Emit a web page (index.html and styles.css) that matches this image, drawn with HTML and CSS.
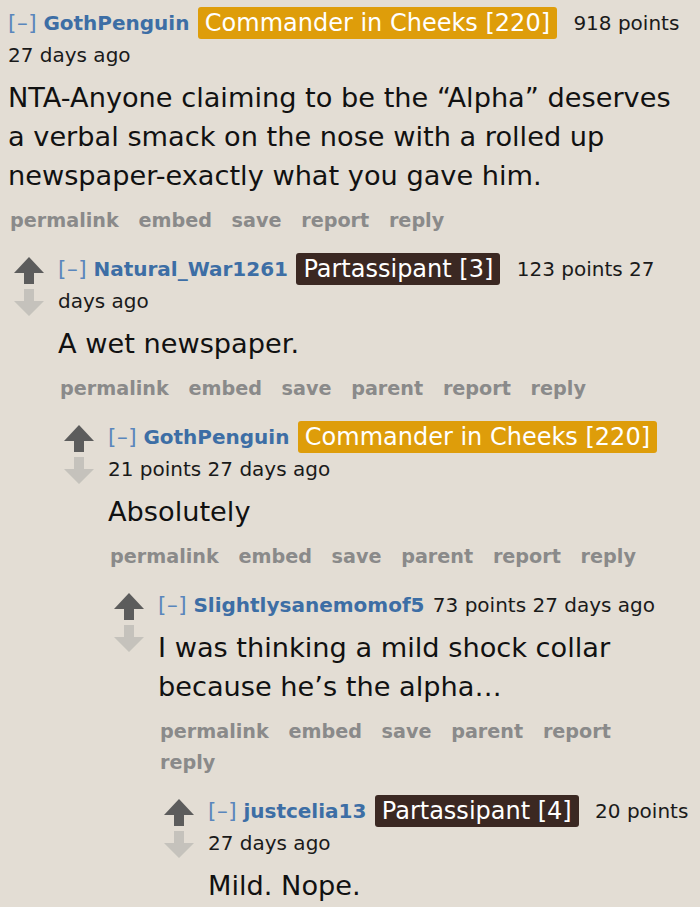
FILE: index.html
```html
<!DOCTYPE html>
<html>
<head>
<meta charset="utf-8">
<link rel="stylesheet" href="styles.css">
</head>
<body>
<div class="thread">
  <div class="entry">
    <p class="tagline"><a class="expand">[–]</a> <a class="author">GothPenguin</a> <span class="flair flair-orange">Commander in Cheeks [220]</span> <span class="score">918 points</span> <time>27 days ago</time></p>
    <div class="md">NTA-Anyone claiming to be the “Alpha” deserves a verbal smack on the nose with a rolled up newspaper-exactly what you gave him.</div>
    <ul class="buttons"><li>permalink</li> <li>embed</li> <li>save</li> <li>report</li> <li>reply</li></ul>

    <div class="comment">
      <div class="midcol">
        <svg class="arrow up" viewBox="0 0 30 27"><polygon points="15,0 30,16 20,16 20,27 10,27 10,16 0,16"/></svg>
        <svg class="arrow down" viewBox="0 0 30 27"><polygon points="10,0 20,0 20,12 30,12 15,27 0,12 10,12"/></svg>
      </div>
      <div class="entry">
        <p class="tagline"><a class="expand">[–]</a> <a class="author">Natural_War1261</a> <span class="flair flair-dark">Partassipant [3]</span> <span class="score">123 points</span> <time>27 days ago</time></p>
        <div class="md">A wet newspaper.</div>
        <ul class="buttons"><li>permalink</li> <li>embed</li> <li>save</li> <li>parent</li> <li>report</li> <li>reply</li></ul>

        <div class="comment">
          <div class="midcol">
            <svg class="arrow up" viewBox="0 0 30 27"><polygon points="15,0 30,16 20,16 20,27 10,27 10,16 0,16"/></svg>
            <svg class="arrow down" viewBox="0 0 30 27"><polygon points="10,0 20,0 20,12 30,12 15,27 0,12 10,12"/></svg>
          </div>
          <div class="entry">
            <p class="tagline"><a class="expand">[–]</a> <a class="author">GothPenguin</a> <span class="flair flair-orange">Commander in Cheeks [220]</span> <span class="score">21 points</span> <time>27 days ago</time></p>
            <div class="md">Absolutely</div>
            <ul class="buttons"><li>permalink</li> <li>embed</li> <li>save</li> <li>parent</li> <li>report</li> <li>reply</li></ul>

            <div class="comment">
              <div class="midcol">
                <svg class="arrow up" viewBox="0 0 30 27"><polygon points="15,0 30,16 20,16 20,27 10,27 10,16 0,16"/></svg>
                <svg class="arrow down" viewBox="0 0 30 27"><polygon points="10,0 20,0 20,12 30,12 15,27 0,12 10,12"/></svg>
              </div>
              <div class="entry">
                <p class="tagline"><a class="expand">[–]</a> <a class="author">Slightlysanemomof5</a> <span class="score">73 points</span> <time>27 days ago</time></p>
                <div class="md">I was thinking a mild shock collar because he’s the alpha…</div>
                <ul class="buttons"><li>permalink</li> <li>embed</li> <li>save</li> <li>parent</li> <li>report</li> <li>reply</li></ul>

                <div class="comment">
                  <div class="midcol">
                    <svg class="arrow up" viewBox="0 0 30 27"><polygon points="15,0 30,16 20,16 20,27 10,27 10,16 0,16"/></svg>
                    <svg class="arrow down" viewBox="0 0 30 27"><polygon points="10,0 20,0 20,12 30,12 15,27 0,12 10,12"/></svg>
                  </div>
                  <div class="entry">
                    <p class="tagline"><a class="expand">[–]</a> <a class="author">justcelia13</a> <span class="flair flair-dark">Partassipant [4]</span> <span class="score">20 points</span> <time>27 days ago</time></p>
                    <div class="md">Mild. Nope.</div>
                  </div>
                </div>
              </div>
            </div>
          </div>
        </div>
      </div>
    </div>
  </div>
</div>
</body>
</html>
```

FILE: styles.css
```css
html, body {
  margin: 0;
  padding: 0;
  background: #e3ddd4;
}
body {
  font-family: "DejaVu Sans", Verdana, sans-serif;
  color: #1a1a1a;
  overflow: hidden;
}
.thread {
  padding: 7px 0 0 8px;
}
.entry {
  min-width: 0;
  flex: 1;
}
.tagline {
  margin: 0;
  padding-right: 5px;
  font-size: 20px;
  line-height: 32px;
  color: #1a1a1a;
}
.expand {
  color: #5a86bc;
  font-weight: normal;
  font-size: 21.5px;
  line-height: 20px;
  letter-spacing: 0.5px;
}
.author {
  color: #3d6ea5;
  font-weight: bold;
  margin-right: 2px;
}
.flair {
  display: inline-block;
  font-size: 24px;
  line-height: 32px;
  padding: 0 7px;
  border-radius: 3px;
  color: #ffffff;
  margin-right: 10px;
  vertical-align: top;
}
.flair-orange {
  background: #de9d0a;
}
.flair-dark {
  background: #3b2822;
}
.md {
  margin-top: 7px;
  font-size: 27.2px;
  line-height: 39px;
  color: #111111;
  padding-right: 8px;
}
.buttons {
  list-style: none;
  margin: 10px 0 0 0;
  padding: 0 14px 0 2px;
  font-size: 19.2px;
  line-height: 31px;
  font-weight: bold;
  color: #8a8a8a;
}
.buttons li {
  display: inline;
  margin-right: 13px;
}
.comment {
  display: flex;
  margin-top: 17px;
}
.midcol {
  width: 50px;
  flex: none;
  padding: 4px 0 0 6px;
  box-sizing: border-box;
  display: flex;
  flex-direction: column;
  gap: 5px;
}
.arrow {
  width: 30px;
  height: 27px;
  display: block;
}
.arrow.up polygon {
  fill: #5c5c5c;
}
.arrow.down polygon {
  fill: #c5c2bc;
}
```
